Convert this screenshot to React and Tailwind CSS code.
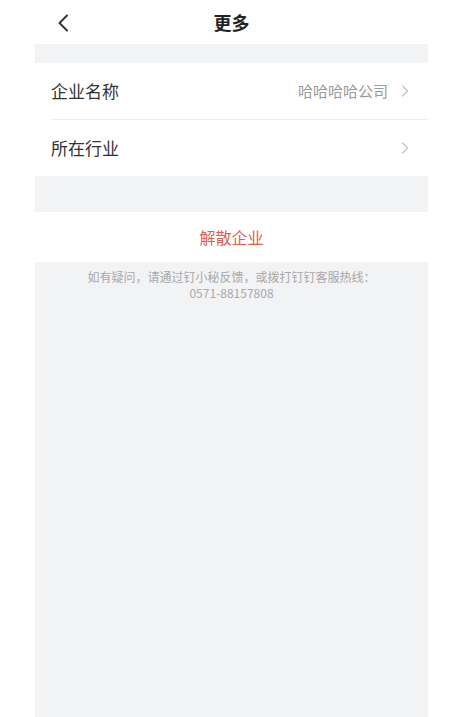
export default function App() {
  const font = { fontFamily: '"Noto Sans CJK SC", "Noto Sans", sans-serif' };
  return (
    <div className="w-[461px] h-[717px] bg-white flex flex-col pl-[35px] pr-[33px]" style={font}>
      <div className="h-[44px] grid grid-cols-[1fr_auto_1fr] items-center bg-white">
        <div className="pl-[22px] pt-[2px] flex items-center">
          <svg width="12" height="18" viewBox="0 0 12 18" fill="none">
            <path d="M10 1.5 L2.5 9 L10 16.5" stroke="#333333" strokeWidth="2" strokeLinecap="round" strokeLinejoin="round" />
          </svg>
        </div>
        <div className="text-[18px] font-bold text-[#222222] leading-none">更多</div>
        <div />
      </div>
      <div className="h-[19px] bg-[#f2f3f5]" />
      <div className="bg-white pl-[16px]">
        <div className="h-[57px] flex items-center justify-between border-b border-[#ececec] pr-[19px]">
          <span className="text-[17px] text-[#333333]">企业名称</span>
          <div className="flex items-center gap-[13px]">
            <span className="text-[15px] text-[#9a9a9a]">哈哈哈哈公司</span>
            <svg width="8" height="12" viewBox="0 0 8 12" fill="none">
              <path d="M1.5 1 L6.5 6 L1.5 11" stroke="#c4c4c4" strokeWidth="1.3" strokeLinecap="round" strokeLinejoin="round" />
            </svg>
          </div>
        </div>
        <div className="h-[56px] flex items-center justify-between pr-[19px]">
          <span className="text-[17px] text-[#333333]">所在行业</span>
          <svg width="8" height="12" viewBox="0 0 8 12" fill="none">
            <path d="M1.5 1 L6.5 6 L1.5 11" stroke="#c4c4c4" strokeWidth="1.3" strokeLinecap="round" strokeLinejoin="round" />
          </svg>
        </div>
      </div>
      <div className="h-[36px] bg-[#f2f3f5]" />
      <div className="h-[50px] bg-white flex items-center justify-center">
        <span className="text-[16px] text-[#d6654f]">解散企业</span>
      </div>
      <div className="flex-1 bg-[#f2f3f5] pt-[7px] text-center text-[12px] leading-[16px] text-[#a8a8a8]">
        <div>如有疑问，请通过钉小秘反馈，或拨打钉钉客服热线：</div>
        <div>0571-88157808</div>
      </div>
    </div>
  );
}
